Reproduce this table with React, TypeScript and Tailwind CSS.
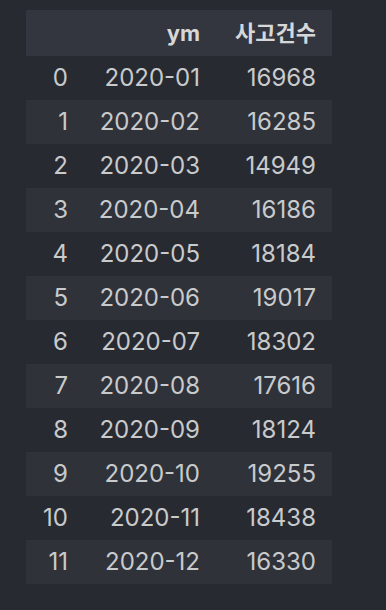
import React from 'react';

const rows: [string, string][] = [
  ['2020-01', '16968'],
  ['2020-02', '16285'],
  ['2020-03', '14949'],
  ['2020-04', '16186'],
  ['2020-05', '18184'],
  ['2020-06', '19017'],
  ['2020-07', '18302'],
  ['2020-08', '17616'],
  ['2020-09', '18124'],
  ['2020-10', '19255'],
  ['2020-11', '18438'],
  ['2020-12', '16330'],
];

export default function App() {
  return (
    <div
      className="min-h-[610px] w-[386px] bg-[#272a31] pt-[10px] pl-[26px]"
      style={{ fontFamily: 'Inter, "Noto Sans CJK KR", sans-serif' }}
    >
      <div className="w-[306px]">
        <div className="grid h-[46px] grid-cols-[58px_132px_116px] items-center bg-[#33363e] text-[22px] font-bold text-[#d6d7d9]">
          <div />
          <div className="pr-4 text-right">ym</div>
          <div className="pr-4 text-right">사고건수</div>
        </div>
        {rows.map(([ym, n], i) => (
          <div
            key={ym}
            className={
              'grid h-[44px] grid-cols-[58px_132px_116px] items-center text-[24px] text-[#c9cacc] ' +
              (i % 2 === 1 ? 'bg-[#2f3239]' : '')
            }
          >
            <div className="pr-4 text-right">{i}</div>
            <div className="pr-4 text-right">{ym}</div>
            <div className="pr-4 text-right">{n}</div>
          </div>
        ))}
      </div>
    </div>
  );
}
